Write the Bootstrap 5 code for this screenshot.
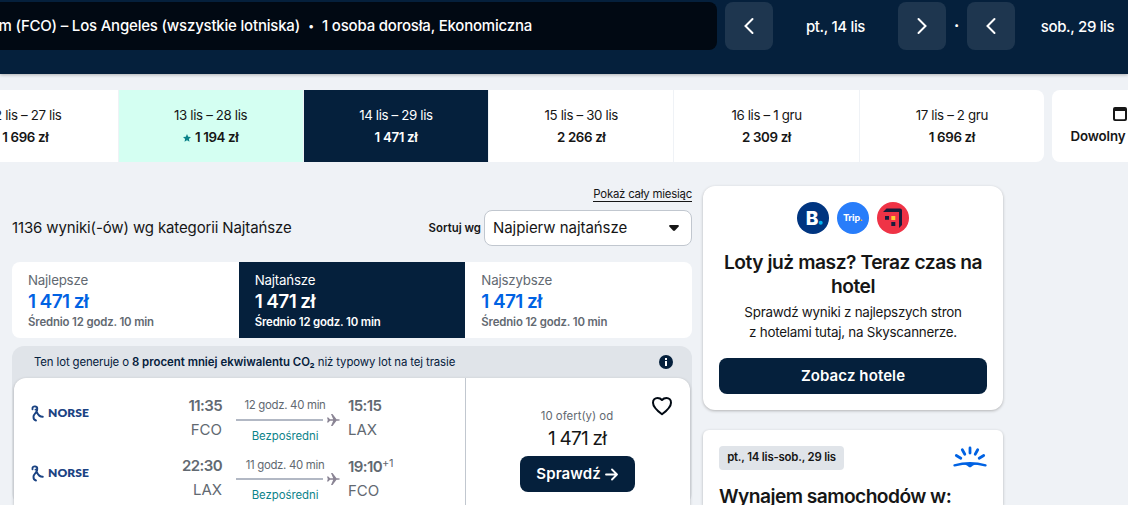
<!DOCTYPE html>
<html lang="pl">
  <head>
    <meta charset="UTF-8" />
    <meta name="viewport" content="width=device-width, initial-scale=1.0" />
    <title>Loty FCO – Los Angeles</title>
    <link
      href="https://cdn.jsdelivr.net/npm/bootstrap@5.3.0/dist/css/bootstrap.min.css"
      rel="stylesheet"
    />
    <style>
      body {
        height: 505px;
        overflow: hidden;
        background: #eff2f6;
        color: #161616;
        font-family: Inter, 'Liberation Sans', sans-serif;
        white-space: nowrap;
      }
      .bg-navy {
        background: #05203c;
        color: #fff;
      }
      .rounded-12 {
        border-radius: 12px;
      }
      .sky-shadow {
        box-shadow: 0 1px 3px rgba(37, 32, 31, 0.3);
      }

      /* Header */
      .top-header {
        height: 74px;
        padding-top: 2px;
        font-size: 15px;
        font-weight: 500;
        letter-spacing: -0.2px;
      }
      .search-summary {
        width: 717px;
        height: 48px;
        margin-right: 8px;
        background: #010913;
        border-radius: 0 8px 8px 0;
      }
      .search-summary .dot {
        width: 22px;
        font-size: 11px;
        text-align: center;
      }
      .route {
        width: 300px;
        direction: rtl;
      }
      .arrow-btn {
        width: 48px;
        height: 48px;
        border-radius: 8px;
        background: #1e364f;
      }
      .header-date {
        width: 125px;
        line-height: 49px;
        letter-spacing: -0.35px;
      }
      .header-dot {
        width: 21px;
        line-height: 48px;
        font-weight: 800;
      }

      /* Date strip */
      .date-strip {
        margin: 16px 0 0 -67px;
        gap: 8px;
      }
      .date-cells {
        width: 1111px;
        height: 72px;
        border-radius: 8px;
        overflow: hidden;
      }
      .date-cell {
        flex: 1 1 0;
        background: #fff;
        border-right: 1px solid #eff2f6;
        font-size: 13.3px;
        line-height: 22px;
        letter-spacing: -0.35px;
        padding-bottom: 1px;
      }
      .date-cell:first-child {
        flex: 0 0 185.5px;
      }
      .date-cell:last-child {
        border-right: 0;
      }
      .date-cell b {
        font-size: 13.3px;
        font-weight: 600;
      }
      .date-cell.cheapest {
        background: #d4fff2;
      }
      .date-cell.chosen {
        background: #05203c;
        color: #fff;
      }
      .any-day {
        width: 136px;
        height: 72px;
        border-radius: 8px;
        background: #fff;
        font-size: 13.3px;
        font-weight: 600;
        letter-spacing: -0.1px;
      }

      /* Results column */
      .page-cols {
        padding: 24px 0 0 12px;
        gap: 11px;
      }
      .results {
        width: 680px;
      }
      .month-link {
        font-size: 11.4px;
        line-height: 14px;
        padding-top: 1px;
        letter-spacing: -0.22px;
        color: #161616;
        border-bottom: 1px solid #161616;
        text-decoration: none;
      }
      .sort-row {
        height: 36px;
        margin-top: 8px;
        font-size: 15px;
        letter-spacing: -0.13px;
      }
      .sort-label {
        font-size: 11.4px;
        font-weight: 600;
        letter-spacing: 0;
        margin-right: 3px;
        padding-top: 1px;
      }
      .sort-box {
        width: 208px;
        height: 36px;
        border: 1px solid #c1c7cf;
        border-radius: 8px;
        background: #fff;
        padding: 0 12px 0 8px;
        letter-spacing: -0.05px;
      }
      .sort-tabs {
        margin-top: 16px;
        height: 76px;
        overflow: hidden;
        border-radius: 8px;
      }
      .sort-tab {
        background: #fff;
        color: #626971;
        padding: 8px 16px 0;
        font-size: 13.3px;
        line-height: 20px;
        letter-spacing: -0.2px;
      }
      .sort-tab strong {
        font-size: 19px;
        font-weight: 600;
        line-height: 24px;
        letter-spacing: -0.6px;
        color: #0062e3;
      }
      .sort-tab small {
        font-size: 11.4px;
        font-weight: 600;
        line-height: 16px;
        letter-spacing: -0.15px;
      }
      .sort-tab.chosen,
      .sort-tab.chosen strong {
        background: #05203c;
        color: #fff;
      }

      /* Ticket */
      .eco-wrap {
        margin-top: 8px;
        padding: 0 2px;
        background: #e0e4e9;
        border-radius: 12px;
      }
      .eco-text {
        height: 32px;
        padding: 0 17px 0 20px;
        font-size: 11.4px;
        letter-spacing: -0.12px;
        color: #05203c;
      }
      .eco-text span {
        padding-top: 2px;
      }
      .eco-text b {
        font-weight: 600;
        letter-spacing: 0;
      }
      .ticket {
        height: 127px;
        background: #fff;
        border-bottom-left-radius: 0;
        border-bottom-right-radius: 0;
      }
      .legs {
        width: 452px;
        padding: 16px 0 0 17px;
        gap: 12px;
        border-right: 1px solid #c1c7cf;
        color: #626971;
        font-size: 15px;
        line-height: 24px;
      }
      .leg {
        height: 48px;
      }
      .leg b {
        font-weight: 600;
        letter-spacing: -0.6px;
      }
      .airline {
        width: 113px;
        padding-bottom: 10px;
        color: #1b4383;
        font: 800 12px/16px Lato, sans-serif;
        letter-spacing: 0.1px;
      }
      .depart {
        width: 78px;
      }
      .stops {
        width: 98px;
        margin: 0 14px;
        font-size: 11.4px;
        line-height: 16px;
        letter-spacing: -0.3px;
        padding-top: 3px;
      }
      .stops svg {
        width: 104px;
        height: 14px;
        margin-bottom: 1px;
        flex: none;
      }
      .leg:last-child .stops svg {
        margin: -1px 0 1px;
      }
      .direct {
        color: #0c838a;
        letter-spacing: -0.05px;
      }
      .leg:last-child .arrive {
        padding-top: 1px;
      }
      .arrive sup {
        font-size: 11px;
        top: -0.45em;
        letter-spacing: -0.3px;
      }
      .offer {
        padding: 30px 2px 0 0;
        position: relative;
      }
      .offer-count {
        font-size: 11.4px;
        line-height: 17px;
        color: #626971;
      }
      .offer-price {
        font-size: 19px;
        line-height: 28px;
        letter-spacing: -0.8px;
      }
      .heart {
        position: absolute;
        right: 16px;
        top: 17px;
      }
      .sky-btn {
        height: 36px;
        border: 0;
        border-radius: 8px;
        font-size: 15px;
        font-weight: 600;
        letter-spacing: 0.1px;
      }
      .check-btn {
        width: 115px;
        margin-top: 3px;
      }

      /* Side cards */
      .side {
        width: 300px;
        gap: 20px;
      }
      .side-card {
        background: #fff;
        padding: 16px;
      }
      .side-card h2 {
        margin: 0;
        font-size: 19.2px;
        font-weight: 600;
        line-height: 24px;
        letter-spacing: -0.45px;
      }
      .side-card p {
        margin: 4px 0 16px;
        font-size: 13.4px;
        line-height: 20px;
        letter-spacing: -0.25px;
      }
      .car-card {
        height: 75px;
        padding-bottom: 0;
        border-bottom-left-radius: 0;
        border-bottom-right-radius: 0;
      }
      .car-card h2 {
        margin-top: 14px;
        letter-spacing: -0.55px;
      }
      .date-tag {
        height: 24px;
        width: 125px;
        border-radius: 4px;
        background: #e0e4e9;
        font-size: 11.4px;
        font-weight: 600;
        letter-spacing: -0.2px;
      }
    </style>
  </head>
  <body>
    <header class="top-header bg-navy d-flex align-items-start sky-shadow overflow-hidden">
      <div class="search-summary d-flex align-items-center flex-shrink-0">
        <div class="route overflow-hidden"><bdi dir="ltr">Rzym (FCO) – Los Angeles (wszystkie lotniska)</bdi></div>
        <span class="dot">•</span>
        <span>1 osoba dorosła, Ekonomiczna</span>
      </div>
      <div class="arrow-btn d-flex align-items-center justify-content-center flex-shrink-0">
        <svg width="24" height="24" fill="none" stroke="#fff" stroke-width="2" stroke-linecap="round"><path d="M15.500 5 8.500 12l7 7" /></svg>
      </div>
      <div class="header-date text-center flex-shrink-0">pt., 14 lis</div>
      <div class="arrow-btn d-flex align-items-center justify-content-center flex-shrink-0">
        <svg width="24" height="24" fill="none" stroke="#fff" stroke-width="2" stroke-linecap="round"><path d="m8.500 5 7 7-7 7" /></svg>
      </div>
      <div class="header-dot text-center flex-shrink-0">·</div>
      <div class="arrow-btn d-flex align-items-center justify-content-center flex-shrink-0">
        <svg width="24" height="24" fill="none" stroke="#fff" stroke-width="2" stroke-linecap="round"><path d="M15.500 5 8.500 12l7 7" /></svg>
      </div>
      <div class="header-date text-center flex-shrink-0">sob., 29 lis</div>
    </header>

    <div class="date-strip d-flex">
      <div class="date-cells d-flex flex-shrink-0 text-center" id="dateCells"></div>
      <div class="any-day d-flex flex-column align-items-center justify-content-center flex-shrink-0">
        <svg class="mb-1" width="16" height="18" viewBox="0 0 16 18"><path fill="#161616" fill-rule="evenodd" d="M3 2h10a2 2 0 0 1 2 2v10a2 2 0 0 1-2 2H3a2 2 0 0 1-2-2V4a2 2 0 0 1 2-2Zm0 4v7.500q0 .7.700.7h8.600q.7 0 .7-.7V6Z" /></svg>
        Dowolny termin
      </div>
    </div>

    <main class="page-cols d-flex align-items-start">
      <section class="results">
        <div class="d-flex justify-content-end">
          <a class="month-link" href="#">Pokaż cały miesiąc</a>
        </div>
        <div class="sort-row d-flex align-items-center">
          <span class="me-auto">1136 wyniki(-ów) wg kategorii Najtańsze</span>
          <span class="sort-label">Sortuj wg</span>
          <div class="sort-box d-flex align-items-center justify-content-between">
            Najpierw najtańsze
            <svg width="10" height="7"><path fill="#161616" d="M1.300 0h7.400c1.100 0 1.500 1 .8 1.800L6 5.600c-.6.600-1.400.6-2 0L.5 1.800C-.2 1 .2 0 1.300 0Z" /></svg>
          </div>
        </div>

        <div class="sort-tabs d-flex" id="sortTabs"></div>

        <div class="eco-wrap">
          <div class="eco-text d-flex align-items-center justify-content-between">
            <span>Ten lot generuje o <b>8 procent mniej ekwiwalentu CO₂</b> niż typowy lot na tej trasie</span>
            <svg width="14" height="14"><circle cx="7" cy="7" r="7" fill="#05203c" /><path fill="#fff" d="M6 3h2v2H6zM6 6h2v5H6z" /></svg>
          </div>
          <div class="ticket rounded-12 sky-shadow d-flex">
            <div class="legs d-flex flex-column" id="legs"></div>
            <div class="offer flex-grow-1 text-center">
              <svg class="heart" width="24" height="22" fill="none" stroke="#010913" stroke-width="2" stroke-linejoin="round"><path d="M12 19.300C8.300 16.500 3 12.400 3 7.700 3 4.800 5 3 7.500 3c1.900 0 3.200.5 4.500 2C13.300 3.500 14.600 3 16.500 3 19 3 21 4.800 21 7.700c0 4.700-5.300 8.800-9 11.600Z" /></svg>
              <div class="offer-count">10 ofert(y) od</div>
              <div class="offer-price">1 471 zł</div>
              <button class="sky-btn bg-navy check-btn p-0">
                Sprawdź
                <svg width="13" height="13" fill="none" stroke="#fff" stroke-width="1.800" stroke-linecap="round" stroke-linejoin="round"><path d="M1 6.500h11M7 1.500l5 5-5 5" /></svg>
              </button>
            </div>
          </div>
        </div>
      </section>

      <aside class="side d-flex flex-column">
        <div class="side-card rounded-12 sky-shadow text-center">
          <div class="d-flex justify-content-center gap-2 mb-3">
            <svg width="32" height="32"><circle cx="16" cy="16" r="16" fill="#003580" /><text x="8.800" y="22.500" font-family="Inter" font-size="19" font-weight="800" fill="#fff">B</text><circle cx="23.700" cy="20.800" r="2" fill="#00b3f0" /></svg>
            <svg width="32" height="32"><circle cx="16" cy="16" r="16" fill="#287dfa" /><text x="6.300" y="19" font-family="Lato" font-size="9.800" font-weight="900" letter-spacing="0" fill="#fff">Trip<tspan fill="#ffb400">.</tspan></text></svg>
            <svg width="32" height="32"><circle cx="16" cy="16" r="16" fill="#ef3346" /><path fill="#171c3c" d="M9.500 6.500H23q2 0 2 2V23l-3 3V10H6zM8 14h4v3.700H8zM14.300 20h4v4h-4z" /><path fill="#ffce32" d="M14.300 14h4v4h-4z" /></svg>
          </div>
          <h2>Loty już masz? Teraz czas na<br />hotel</h2>
          <p>Sprawdź wyniki z najlepszych stron<br />z hotelami tutaj, na Skyscannerze.</p>
          <button class="sky-btn bg-navy w-100">Zobacz hotele</button>
        </div>

        <div class="side-card car-card rounded-top rounded-12 sky-shadow">
          <div class="d-flex justify-content-between">
            <span class="date-tag d-flex align-items-center justify-content-center">pt., 14 lis-sob., 29 lis</span>
            <svg width="34" height="24" fill="none" stroke="#0062e3" stroke-width="2.800" stroke-linecap="round"><path d="M17 2v5M9.300 3.800l2.500 4.500M24.700 3.800l-2.500 4.500M3.300 9.500l4.500 2.700M30.700 9.500l-4.500 2.700" /><path stroke-width="2.400" d="M1.500 19.300q15.500-4 31 0" /><path fill="#0062e3" stroke="none" d="M9 17.300h16l-5 2.300-1.600 1.200a2.300 2.300 0 0 1-2.800 0L14 19.600z" /></svg>
          </div>
          <h2>Wynajem samochodów w:</h2>
        </div>
      </aside>
    </main>

    <script>
      const dates = [
        { range: '12 lis – 27 lis', price: '1 696 zł' },
        { range: '13 lis – 28 lis', price: '1 194 zł', state: 'cheapest' },
        { range: '14 lis – 29 lis', price: '1 471 zł', state: 'chosen' },
        { range: '15 lis – 30 lis', price: '2 266 zł' },
        { range: '16 lis – 1 gru', price: '2 309 zł' },
        { range: '17 lis – 2 gru', price: '1 696 zł' }
      ]
      const tabs = [
        { name: 'Najlepsze' },
        { name: 'Najtańsze', state: 'chosen' },
        { name: 'Najszybsze' }
      ]
      const legs = [
        { from: 'FCO', out: '11:35', to: 'LAX', arr: '15:15', time: '12 godz. 40 min' },
        { from: 'LAX', out: '22:30', to: 'FCO', arr: '19:10', days: '+1', time: '11 godz. 40 min' }
      ]

      const star =
        '<svg class="me-1" width="8" height="8" viewBox="0 0 10 10"><path fill="#0c838a" d="m5 0 1.500 3.300 3.500.4-2.600 2.400.7 3.600L5 7.900 1.900 9.700l.7-3.600L0 3.700l3.500-.4z"/></svg>'

      document.getElementById('dateCells').innerHTML = dates
        .map(
          d => `<div class="date-cell ${d.state || ''} d-flex flex-column justify-content-center">
            <span>${d.range}</span>
            <b>${d.state === 'cheapest' ? star : ''}${d.price}</b>
          </div>`
        )
        .join('')

      document.getElementById('sortTabs').innerHTML = tabs
        .map(
          t => `<div class="sort-tab ${t.state || ''} w-100 d-flex flex-column">
            <span>${t.name}</span>
            <strong>1 471 zł</strong>
            <small>Średnio 12 godz. 10 min</small>
          </div>`
        )
        .join('')

      document.getElementById('legs').innerHTML = legs
        .map(
          l => `<div class="leg d-flex">
            <div class="airline d-flex align-items-center">
              <svg class="me-1" width="13" height="17" fill="none" stroke="#1b4383" stroke-width="1.900" stroke-linecap="round"><path d="M1.500 4.200C1 2 3 1 4.500 1.500 7 2 6.500 5 4.500 4.600M6.300 3.500C7 7 3 8.500 2.500 11.500c-.2 2 .7 3.500 2.500 4M6 7.500c1 2 2.500 4.500 5.800 4.300"/></svg>
              NORSE
            </div>
            <div class="depart text-end"><b>${l.out}</b><br />${l.from}</div>
            <div class="stops d-flex flex-column align-items-center">
              <span>${l.time}</span>
              <svg class="align-self-start" viewBox="0 0 104 14"><path stroke="#b2b8c4" stroke-width="2" d="M0 7h87"/><path fill="#8a8494" d="M91 4.500h1.300L94 6.300h3.200L95 1h1.500l4 5.300h1.700q1.500.2 1.800.7-.3.500-1.800.7h-1.700l-4 5.300H95l2.200-5.300H94l-1.700 1.800H91l.8-2.500z"/></svg>
              <span class="direct">Bezpośredni</span>
            </div>
            <div class="arrive"><b>${l.arr}</b>${l.days ? `<sup>${l.days}</sup>` : ''}<br />${l.to}</div>
          </div>`
        )
        .join('')
    </script>
    <script src="https://cdn.jsdelivr.net/npm/bootstrap@5.3.0/dist/js/bootstrap.bundle.min.js"></script>
  </body>
</html>
